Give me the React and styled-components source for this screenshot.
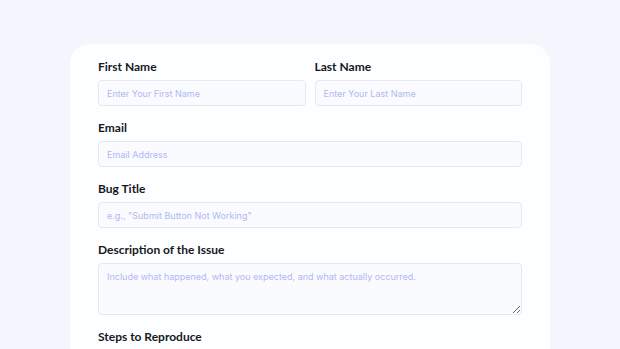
import React from "react";
import styled, { createGlobalStyle } from "styled-components";

const Global = createGlobalStyle`
  html, body { margin: 0; padding: 0; background: #f3f6fd; }
  body { font-family: "Inter", "Noto Sans", sans-serif; overflow: hidden; }
  * { box-sizing: border-box; }
`;

const Page = styled.div`
  width: 620px;
  height: 349px;
  overflow: hidden;
  padding: 44px 70px 0;
  background: #f3f6fd;
`;

const Card = styled.form`
  background: #fdfeff;
  border-radius: 20px 20px 0 0;
  padding: 16px 28px 40px;
  display: flex;
  flex-direction: column;
  gap: 15px;
`;

const Row = styled.div`
  display: grid;
  grid-template-columns: 1fr 1fr;
  gap: 9px;
`;

const Field = styled.label`
  display: flex;
  flex-direction: column;
  gap: 6px;
`;

const Label = styled.span`
  font-family: "Lato", "Inter", sans-serif;
  font-weight: 700;
  font-size: 12px;
  line-height: 14px;
  color: #16181d;
`;

const fieldBase = `
  width: 100%;
  border: 1px solid #e3e8f2;
  background: #f9fbff;
  border-radius: 4px;
  padding: 0 8px;
  font-family: "Inter", sans-serif;
  font-size: 9px;
  color: #333;
  outline: none;
  &::placeholder { color: #b0baf0; }
`;

const Input = styled.input`
  ${fieldBase}
  height: 26px;
`;

const TextArea = styled.textarea`
  ${fieldBase}
  height: 52px;
  padding-top: 7px;
  resize: vertical;
`;

export default function App() {
  return (
    <>
      <Global />
      <Page>
        <Card>
          <Row>
            <Field>
              <Label>First Name</Label>
              <Input placeholder="Enter Your First Name" />
            </Field>
            <Field>
              <Label>Last Name</Label>
              <Input placeholder="Enter Your Last Name" />
            </Field>
          </Row>
          <Field>
            <Label>Email</Label>
            <Input placeholder="Email Address" />
          </Field>
          <Field>
            <Label>Bug Title</Label>
            <Input placeholder={'e.g., "Submit Button Not Working"'} />
          </Field>
          <Field>
            <Label>Description of the Issue</Label>
            <TextArea placeholder="Include what happened, what you expected, and what actually occurred." />
          </Field>
          <Field>
            <Label>Steps to Reproduce</Label>
          </Field>
        </Card>
      </Page>
    </>
  );
}
